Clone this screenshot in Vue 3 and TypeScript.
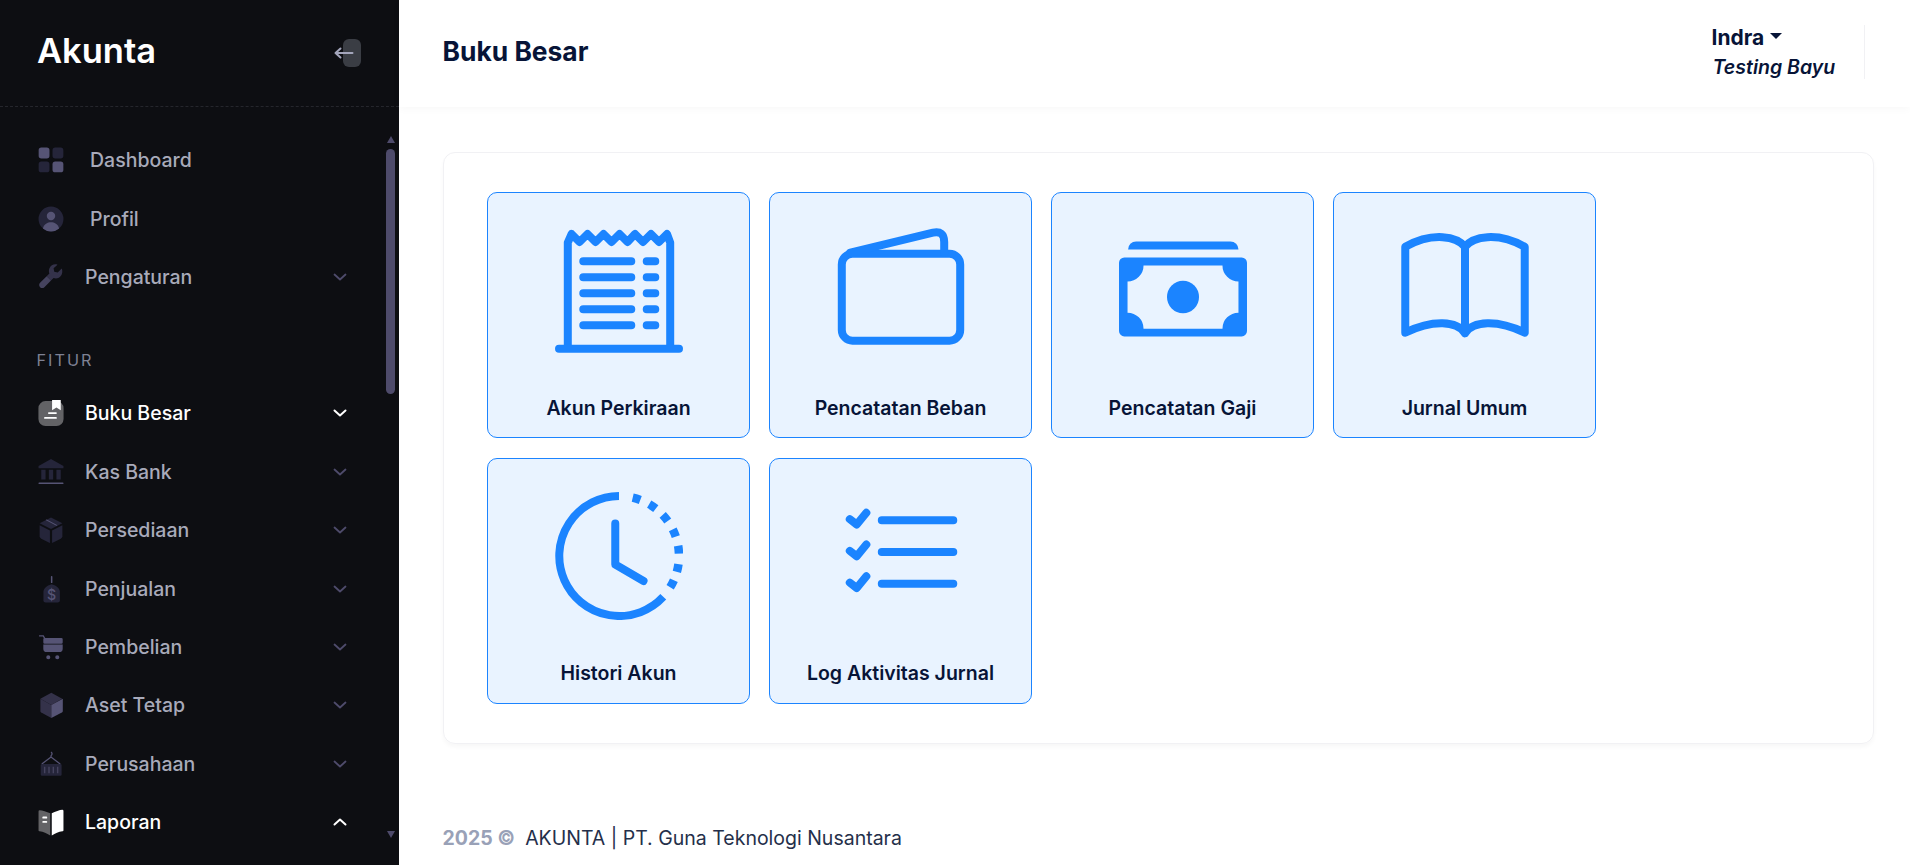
<script setup lang="ts">
type Shape = { d: string; k: string }
type Item = { label: string; shapes: Shape[]; active?: boolean; open?: boolean; chevron?: boolean; wide?: boolean; glyph?: string }

const rr = (x: number, y: number, w: number, h: number, r: number) =>
  `M${x + r} ${y}h${w - 2 * r}a${r} ${r} 0 0 1 ${r} ${r}v${h - 2 * r}a${r} ${r} 0 0 1 ${-r} ${r}h${-(w - 2 * r)}a${r} ${r} 0 0 1 ${-r} ${-r}v${-(h - 2 * r)}a${r} ${r} 0 0 1 ${r} ${-r}z`
const dot = (x: number, y: number, r: number) =>
  `M${x - r} ${y}a${r} ${r} 0 1 0 ${2 * r} 0a${r} ${r} 0 1 0 ${-2 * r} 0z`

const topItems: Item[] = [
  {
    label: 'Dashboard',
    wide: true,
    shapes: [
      { d: rr(0.6, 0.5, 10, 10, 2.5), k: 'mid' },
      { d: rr(13.4, 0.5, 10, 10, 2.5), k: 'dim' },
      { d: rr(0.6, 13.4, 10, 10, 2.5), k: 'dim' },
      { d: rr(13.4, 13.4, 10, 10, 2.5), k: 'mid' },
    ],
  },
  {
    label: 'Profil',
    wide: true,
    shapes: [
      { d: dot(12, 12, 11.5), k: 'dim' },
      { d: dot(12, 9.2, 3.9), k: 'mid' },
      { d: 'M4.5 20.8C5.5 16.5 9 15 12 15s6.500 1.500 7.500 5.800A11.500 11.500 0 0 1 4.500 20.800z', k: 'mid' },
    ],
  },
  {
    label: 'Pengaturan',
    chevron: true,
    shapes: [
      { d: 'M21.9 4.200L18.200 7.900L15 7.200L14.400 4L18 .6C15 -.4 11.800 1 10.600 3.900C9.900 5.500 9.900 7.200 10.500 8.800L8 11.300L12 15.300L14.400 12.900C16 13.500 17.600 13.400 19.200 12.700C22.100 11.300 23.200 7.100 21.900 4.200z', k: 'dim2' },
      { d: 'M8 11.300L1.900 17.400C.8 18.500 .8 20.300 1.900 21.400C3 22.500 4.800 22.500 5.900 21.400L12 15.300z', k: 'soft' },
    ],
  },
]

const featureItems: Item[] = [
  {
    label: 'Buku Besar',
    active: true,
    chevron: true,
    shapes: [
      { d: rr(0.4, 1, 23.2, 23, 6.5), k: 'grey' },
      { d: 'M13 0h8v9.500l-4-2.500-4 2.500z', k: 'white' },
      { d: rr(9.2, 11.2, 8.200, 1.700, 0.8), k: 'white' },
      { d: rr(5.6, 15.6, 11.800, 1.700, 0.8), k: 'white' },
    ],
  },
  {
    label: 'Kas Bank',
    chevron: true,
    shapes: [
      { d: 'M12 0L23.500 6.500V8.500H.5V6.500z', k: 'dim' },
      { d: 'M3 10h4v9H3zM10 10h4v9h-4zM17 10h4v9h-4z', k: 'dim' },
      { d: rr(0.5, 21.6, 23, 1.400, 0.5), k: 'mid' },
    ],
  },
  {
    label: 'Persediaan',
    chevron: true,
    shapes: [
      { d: 'M12 .5L22.500 5.800L12 11L1.500 5.800z', k: 'dim' },
      { d: 'M1.500 7.500L11 12.400V24L3 20Q1.500 19.200 1.500 17.800z', k: 'dim' },
      { d: 'M22.500 7.500L13 12.400V24L21 20Q22.500 19.200 22.500 17.800z', k: 'dim' },
      { d: 'M7 2.800L8 2.200L18 7.500L17 8.100z', k: 'mid' },
    ],
  },
  {
    label: 'Penjualan',
    chevron: true,
    glyph: '$',
    shapes: [
      { d: 'M12.600 7.500C9 8.500 5 11 5 14.500V22.500a2 2 0 0 0 2 2H18.200a2 2 0 0 0 2-2V14.500C20.200 11 16.200 8.500 12.600 7.500z', k: 'dim' },
      { d: rr(11.9, 0, 1.400, 6.500, 0.6), k: 'mid' },
    ],
  },
  {
    label: 'Pembelian',
    chevron: true,
    shapes: [
      { d: 'M1 1.200H5.200L8 6H6.600L4.500 2.400H1z', k: 'mid' },
      { d: rr(4.900, 3.700, 17.900, 5.300, 1.200), k: 'mid' },
      { d: 'M4.900 9.800H22.800V13.500a3.200 3.200 0 0 1-3.200 3.200H8.100a3.200 3.200 0 0 1-3.200-3.200z', k: 'mid' },
      { d: dot(9.500, 21.500, 1.900), k: 'mid' },
      { d: dot(17.800, 21.500, 1.900), k: 'mid' },
    ],
  },
  {
    label: 'Aset Tetap',
    chevron: true,
    shapes: [
      { d: 'M12.300 .8L22.300 6.200L12.300 12L2.200 6.200z', k: 'dim2' },
      { d: 'M2.200 6.200L12.300 12V24L3 19Q2.200 18.500 2.200 17.500z', k: 'dim2' },
      { d: 'M22.900 6.200V17.500Q22.900 18.500 22 19L12.300 24V12z', k: 'mid' },
    ],
  },
  {
    label: 'Perusahaan',
    chevron: true,
    shapes: [
      { d: 'M12 1c1.300 .8 1.300 2.300 0 3.500V5.500M3.500 12L12 5.500L20.500 12', k: 'line' },
      { d: rr(2.5, 12, 19.300, 10.800, 1.200), k: 'dim' },
      { d: 'M5.500 14.500h1.300v6H5.500zM9.500 14.500h1.300v6H9.500zM13.500 14.500h1.300v6h-1.300zM17.500 14.500h1.300v6h-1.300z', k: 'soft' },
    ],
  },
  {
    label: 'Laporan',
    active: true,
    open: true,
    chevron: true,
    shapes: [
      { d: 'M11.300 4C8 2.500 4 1.200 1.500 1.200a1 1 0 0 0-1 1V19.500c0 .6 .4 1 1 1C5 21 8 22.600 11.300 24.500z', k: 'grey' },
      { d: 'M12.700 4C16 2.500 20 .8 22.500 .8a1 1 0 0 1 1 1V19.500c0 .6-.4 1-1 1C19 21 16 22.600 12.700 24.500z', k: 'white' },
      { d: rr(4, 7, 4.500, 1.800, 0.8), k: 'white' },
      { d: rr(4, 11, 4.500, 1.800, 0.8), k: 'white' },
    ],
  },
]

const dashes = [17, 34, 50.5, 67.4, 84, 101.6, 117.7].map((deg) => {
  const pt = (a: number) => {
    const t = (a * Math.PI) / 180
    return `${(12 + 11.25 * Math.sin(t)).toFixed(2)} ${(12 - 11.25 * Math.cos(t)).toFixed(2)}`
  }
  return `M${pt(deg - 3.8)}A11.25 11.25 0 0 1 ${pt(deg + 3.8)}`
})

const tiles = [
  { label: 'Akun Perkiraan', icon: 'receipt' },
  { label: 'Pencatatan Beban', icon: 'wallet' },
  { label: 'Pencatatan Gaji', icon: 'money' },
  { label: 'Jurnal Umum', icon: 'book' },
  { label: 'Histori Akun', icon: 'clock' },
  { label: 'Log Aktivitas Jurnal', icon: 'list' },
]
</script>

<template>
  <div class="app">
    <aside class="sidebar">
      <div class="brand">
        <span class="logo">Akunta</span>
        <span class="toggle">
          <svg class="toggle-arrow" width="20" height="14" viewBox="0 0 20 14" fill="none" stroke="#a3a5bb" stroke-width="2" stroke-linecap="round" stroke-linejoin="round">
            <path d="M1.500 7H18.500M6.500 2.500L1.500 7L6.500 11.500" />
          </svg>
        </span>
      </div>
      <div class="scroller">
        <nav class="menu">
          <a v-for="it in topItems" :key="it.label" class="row" :class="{ wide: it.wide }">
            <svg class="ico" viewBox="0 0 24 24">
              <path v-for="(s, i) in it.shapes" :key="i" :d="s.d" :class="s.k" />
            </svg>
            <span>{{ it.label }}</span>
            <svg v-if="it.chevron" class="chev" viewBox="0 0 14 8"><path d="M1.500 1.500L7 6.500L12.500 1.500" /></svg>
          </a>
          <div class="section">FITUR</div>
          <a v-for="it in featureItems" :key="it.label" class="row" :class="{ active: it.active }">
            <svg class="ico" viewBox="0 0 24 24">
              <path v-for="(s, i) in it.shapes" :key="i" :d="s.d" :class="s.k" />
              <text v-if="it.glyph" x="12.600" y="22.500" text-anchor="middle" class="glyph">{{ it.glyph }}</text>
            </svg>
            <span>{{ it.label }}</span>
            <svg v-if="it.chevron" class="chev" :class="{ up: it.open }" viewBox="0 0 14 8"><path d="M1.500 1.500L7 6.500L12.500 1.500" /></svg>
          </a>
        </nav>
        <div class="scrollbar">
          <span class="arrow-up"></span>
          <span class="thumb"></span>
          <span class="arrow-down"></span>
        </div>
      </div>
    </aside>

    <div class="main">
      <header class="topbar">
        <h1>Buku Besar</h1>
        <div class="user">
          <div class="user-name">Indra<span class="caret"></span></div>
          <div class="user-org">Testing Bayu</div>
        </div>
      </header>

      <section class="content">
        <div class="card">
          <a v-for="t in tiles" :key="t.label" class="tile">
            <svg class="tile-ico" viewBox="0 0 24 24" fill="none" stroke="#1b84ff" stroke-width="1.500" stroke-linecap="round" stroke-linejoin="round">
              <template v-if="t.icon === 'receipt'">
                <path d="M2.400 22.500V3.100L3.100 1.500L4.600 3L6.100 1.500L7.600 3L9.100 1.500L10.600 3L12.100 1.500L13.600 3L15 1.500L16.500 3L18 1.500L19.500 3L21 1.500L21.600 3.100V22.500" />
                <path d="M.75 23H23.250" />
                <path d="M5.300 6.600H14.300M5.300 9.600H14.300M5.300 12.600H14.300M5.300 15.600H14.300M5.300 18.600H14.300M17.200 6.600H18.800M17.200 9.600H18.800M17.200 12.600H18.800M17.200 15.600H18.800M17.200 18.600H18.800" />
              </template>
              <template v-else-if="t.icon === 'wallet'">
                <rect x=".9" y="5.200" width="22.200" height="16.300" rx="2" />
                <path d="M2.500 5L18 1.250Q20.100 .8 20.100 3V5" />
              </template>
              <template v-else-if="t.icon === 'money'">
                <path stroke="none" fill="#1b84ff" d="M1.700 4.400a1.500 1.500 0 0 1 1.500-1.500h17.700a1.500 1.500 0 0 1 1.500 1.500z" />
                <path stroke="none" fill="#1b84ff" fill-rule="evenodd" d="M1 5.900H23a1 1 0 0 1 1 1V19.700a1 1 0 0 1-1 1H1a1 1 0 0 1-1-1V6.900a1 1 0 0 1 1-1zM4.600 7.400H19.400a3 3 0 0 0 3 3V16.250a3 3 0 0 0-3 3H4.600a3 3 0 0 0-3-3V10.400a3 3 0 0 0 3-3z" />
                <ellipse stroke="none" fill="#1b84ff" cx="12" cy="13.300" rx="3" ry="3.050" />
              </template>
              <template v-else-if="t.icon === 'book'">
                <path d="M12 3.900C10.500 2 6 1 .8 3.900V20C6 17.500 10.500 17.800 12 20.100C13.500 17.800 18 17.500 23.200 20V3.900C18 1 13.500 2 12 3.900V20.100" />
              </template>
              <template v-else-if="t.icon === 'clock'">
                <path stroke-linecap="butt" d="M12 .75A11.250 11.250 0 1 0 20.300 19.650" />
                <path v-for="(d, i) in dashes" :key="i" :d="d" stroke-linecap="butt" stroke-width="1.600" />
                <path d="M11.300 5.900V13.600L16.600 16.700" />
              </template>
              <template v-else>
                <path d="M8.400 5.300H21.800M8.400 11.250H21.800M8.400 17.200H21.800" />
                <path d="M2.400 5.100L3.700 6.100L5.500 3.900M2.400 11.050L3.700 12.050L5.500 9.850M2.400 17L3.700 18L5.500 15.800" />
              </template>
            </svg>
            <span class="tile-label">{{ t.label }}</span>
          </a>
        </div>
      </section>

      <footer class="footer">
        <span class="year">2025 ©</span>
        <span class="owner">AKUNTA | PT. Guna Teknologi Nusantara</span>
      </footer>
    </div>
  </div>
</template>

<style>
html, body { margin: 0; background: #fff; }
</style>

<style scoped>
.app {
  display: grid;
  grid-template-columns: 399px 1fr;
  height: 865px;
  overflow: hidden;
  font-family: Inter, "Liberation Sans", sans-serif;
}
.sidebar {
  background: #0d0e12;
  display: flex;
  flex-direction: column;
  min-height: 0;
}
.brand {
  height: 106px;
  flex: none;
  border-bottom: 1px dashed #25262c;
  display: flex;
  align-items: center;
  justify-content: space-between;
  padding: 0 38px 0 37px;
}
.logo {
  color: #fff;
  font-size: 34.500px;
  font-weight: 600;
  line-height: 1;
  margin-bottom: 4px;
}
.toggle {
  position: relative;
  width: 18px;
  height: 28px;
  border-radius: 6px;
  background: #3a3d44;
}
.toggle-arrow {
  position: absolute;
  left: -9px;
  top: 7px;
}
.scroller {
  flex: 1;
  min-height: 0;
  display: flex;
}
.menu {
  width: 386px;
  padding-top: 24px;
  overflow: hidden;
  box-sizing: border-box;
}
.row {
  height: 58.400px;
  display: flex;
  align-items: center;
  gap: 21px;
  padding: 0 39px 0 38px;
  color: #a8aaba;
  font-size: 19.500px;
  font-weight: 500;
}
.row.wide { gap: 26px; }
.row.active { color: #fff; }
.ico {
  width: 26px;
  height: 26px;
  flex: none;
  overflow: visible;
}
.mid { fill: #565475; }
.soft { fill: #45435e; }
.dim { fill: #25253a; }
.dim2 { fill: #34324a; }
.grey { fill: #636366; }
.white { fill: #fff; }
.line { fill: none; stroke: #565475; stroke-width: 1.200; }
.glyph { fill: #565475; font-size: 13px; font-family: Inter, sans-serif; font-weight: 500; }
.chev {
  width: 14px;
  height: 8px;
  margin-left: auto;
  fill: none;
  stroke: #4e4b6b;
  stroke-width: 1.800;
  stroke-linecap: round;
  stroke-linejoin: round;
}
.active .chev { stroke: #fff; stroke-width: 2; }
.chev.up { transform: rotate(180deg); }
.section {
  padding: 35.500px 0 6px 36.500px;
  line-height: 36.500px;
  color: #7e8194;
  font-size: 16.250px;
  font-weight: 400;
  letter-spacing: 2px;
}
.scrollbar {
  width: 9px;
  display: flex;
  flex-direction: column;
  align-items: center;
  padding: 29px 0 27px;
  box-sizing: border-box;
}
.arrow-up, .arrow-down {
  width: 0;
  height: 0;
  border-left: 4.500px solid transparent;
  border-right: 4.500px solid transparent;
}
.arrow-up { border-bottom: 7px solid #4e4b6b; }
.arrow-down { border-top: 7px solid #4e4b6b; margin-top: auto; }
.thumb {
  width: 9px;
  height: 245px;
  margin-top: 6px;
  border-radius: 5px;
  background: #4e4b6b;
}
.main {
  display: flex;
  flex-direction: column;
  min-width: 0;
  background: #fff;
}
.topbar {
  height: 107px;
  flex: none;
  box-sizing: border-box;
  display: flex;
  align-items: center;
  justify-content: space-between;
  padding: 0 45.500px 0 43.500px;
  box-shadow: 0 2px 8px rgba(0, 0, 0, 0.03);
}
h1 {
  margin: 0 0 5px;
  color: #071437;
  font-size: 26.400px;
  font-weight: 700;
}
.user {
  height: 54px;
  width: 153px;
  margin-bottom: 3px;
  box-sizing: border-box;
  border-right: 1px solid #f1f1f4;
  color: #071437;
  display: flex;
  flex-direction: column;
  justify-content: center;
  gap: 6px;
}
.user-name {
  font-size: 21px;
  font-weight: 700;
  line-height: 24px;
  display: flex;
  align-items: center;
  gap: 6px;
}
.caret {
  width: 0;
  height: 0;
  margin-bottom: 5px;
  border-left: 6px solid transparent;
  border-right: 6px solid transparent;
  border-top: 6px solid #071437;
}
.user-org {
  padding-left: 1px;
  font-size: 19.500px;
  font-weight: 600;
  font-style: italic;
  line-height: 22px;
}
.content {
  flex: 1;
  padding: 45px 36.500px 0 43.500px;
}
.card {
  height: 592px;
  box-sizing: border-box;
  padding: 39px 43px;
  border: 1px solid #f1f1f4;
  border-radius: 12px;
  box-shadow: 0 3px 4px rgba(0, 0, 0, 0.03);
  display: grid;
  grid-template-columns: repeat(4, 263px);
  grid-auto-rows: 246px;
  gap: 19.500px 19px;
  align-content: start;
}
.tile {
  box-sizing: border-box;
  padding: 33px 0 0 1px;
  border: 1px solid #1b84ff;
  border-radius: 10px;
  background: #e9f3ff;
  display: flex;
  flex-direction: column;
  align-items: center;
}
.tile-ico {
  width: 128px;
  height: 128px;
  flex: none;
}
.tile-label {
  margin-top: 41.500px;
  color: #071437;
  font-size: 19.500px;
  font-weight: 600;
  line-height: 24px;
}
.footer {
  height: 48px;
  flex: none;
  padding: 0 0 3px 43.500px;
  display: flex;
  align-items: center;
  gap: 10px;
  font-size: 19.500px;
}
.year {
  color: #99a1b7;
  font-weight: 700;
}
.owner {
  color: #252f4a;
  font-weight: 400;
}
</style>
